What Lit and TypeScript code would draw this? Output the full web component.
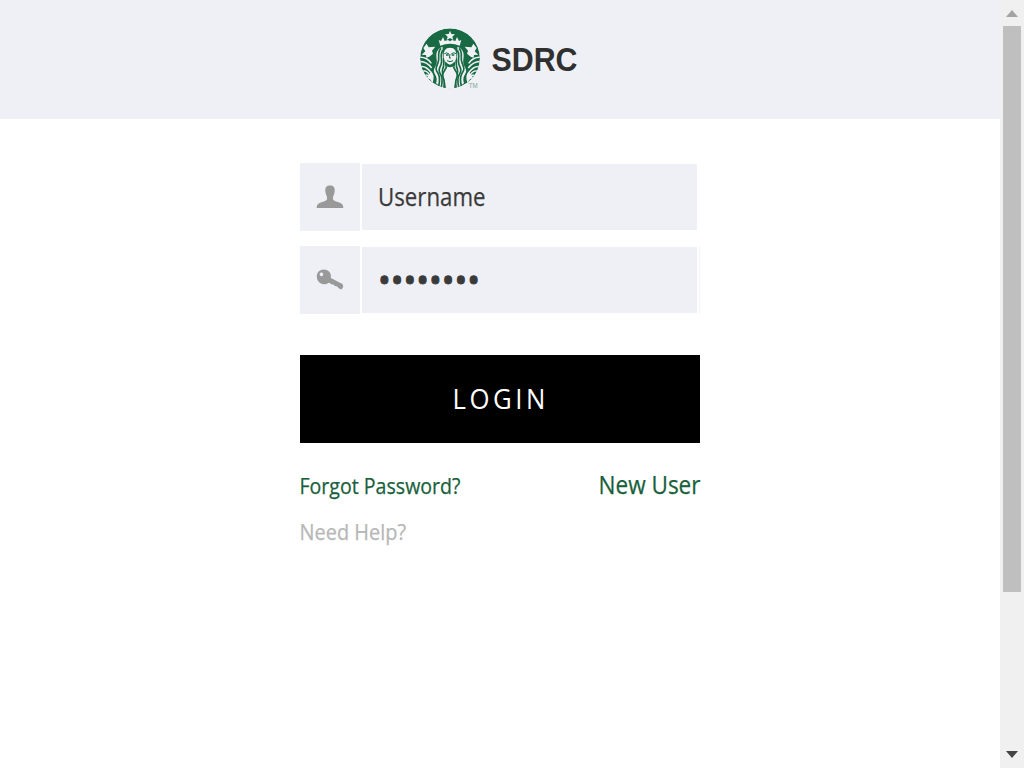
import { LitElement, html, css, svg } from "lit";
import { customElement } from "lit/decorators.js";

@customElement("brand-logo")
class BrandLogo extends LitElement {
  static styles = css`
    :host { display: block; width: 80px; height: 80px; }
    svg { display: block; width: 80px; height: 80px; }
    .tm { font: 400 19px "Liberation Sans", Arial, sans-serif; fill: #7fa594; }
  `;
  private half() {
    return svg`
      <path d="M40 84 L50 71 L56 82 L76 80 L66 92 L69 101 L58 110 L49 113 L48 105 L35 104 L46 94Z" fill="#f0f1f5"/>
      <g fill="none" stroke="#f0f1f5" stroke-width="4.5">
        <path d="M28 112 Q50 110 64 130"/>
        <path d="M26 125 Q48 122 65 144"/>
        <path d="M27 141 Q46 134 63 157"/>
        <path d="M34 156 Q47 146 60 166"/>
        <path d="M42 172 Q49 158 60 172"/>
      </g>
      <path d="M98 80 C77 89 78 103 80 118 C83 139 69 143 72 156 C75 167 84 170 78 190 L105 208 L113 155 C109 144 103 137 104 125 C97 108 97 94 98 80Z" fill="#f0f1f5"/>
      <path d="M62 153 Q76 164 68 188 L60 178 L47 174 Q59 168 62 153Z" fill="#f0f1f5"/>
      <g fill="none" stroke="#176a43" stroke-width="5">
        <path d="M93 85 C79 98 91 113 84 128 C78 143 75 148 84 160 Q92 173 86 199"/>
        <path d="M98 91 C88 106 99 119 93 134 C86 149 85 153 93 165 Q99 176 94 202"/>
        <path d="M102 111 C98 130 105 134 98 147 C94 158 101 164 103 173 Q105 184 101 205"/>
      </g>`;
  }
  render() {
    return html`<svg viewBox="0 0 240 240" aria-label="Siren logo">
      <defs><clipPath id="disc"><circle cx="120" cy="115" r="89.5"/></clipPath></defs>
      <g clip-path="url(#disc)">
        <circle cx="120" cy="115" r="90" fill="#176a43"/>
        <g>${this.half()}</g>
        <g transform="translate(240 0) scale(-1 1)">${this.half()}</g>
        <path d="M120 134 Q104 132 101 112 Q98 83 120 83 Q142 83 139 112 Q136 132 120 134Z" fill="#f0f1f5"/>
        <path d="M103 101 Q110 96 117 102 M124 101 Q132 96 138 101 M120 102 L118 114 L123 114 M111 122 Q120 128 129 122" fill="none" stroke="#176a43" stroke-width="3"/>
        <path d="M108 105h8M125 105h8" stroke="#176a43" stroke-width="4"/>
        <path d="M108 138 Q120 145 132 138 L136 151 Q147 165 138 181 L134 210 H106 L102 181 Q93 165 104 151Z" fill="#f0f1f5"/>
        <path d="M107 129 Q112 138 120 138 Q128 138 133 129 M110 139 Q107 146 103 153 Q94 163 102 180 L106 210 M130 139 Q133 146 137 153 Q146 163 138 180 L134 210" fill="none" stroke="#176a43" stroke-width="5"/>
        <path d="M120 32 L124 42 L135 43 L127 50 L130 60 L120 54 L110 60 L113 50 L105 43 L116 42Z" fill="#f0f1f5"/>
        <path d="M86 60 L93 63 L99 51 L104 63 L114 60 L120 64 L126 60 L136 63 L141 51 L147 63 L154 60 L149 77 Q120 66 91 77Z" fill="#f0f1f5"/>
      </g>
      <text class="tm" x="176" y="204" textLength="27" lengthAdjust="spacingAndGlyphs">TM</text>
    </svg>`;
  }
}

@customElement("app-root")
class AppRoot extends LitElement {
  static styles = css`
    :host { display: block; font-family: "Open Sans", "Noto Sans", sans-serif; }
    * { box-sizing: border-box; }
    .page { display: flex; width: 100%; height: 768px; background: #fff; overflow: hidden; }
    .main { width: 1000px; }
    .header { height: 119px; background: #eff0f5; display: flex; padding: 20px 0 0 410px; }
    svg { display: block; overflow: visible; }
    .name { font: 700 32.5px "Liberation Sans", Arial, sans-serif; fill: #303030; }
    .form { width: 400px; margin: 44px 0 0 300px; }
    .row { display: flex; align-items: center; height: 68px; margin-bottom: 15px; }
    .icon { width: 60px; height: 68px; background: #eff0f5; display: flex; align-items: center; justify-content: center; }
    .field { width: 335px; height: 66px; margin-left: 2px; background: #eff0f5; }
    .edge { width: 1px; height: 68px; margin-left: 2px; background: #f3f4f8; }
    .button { display: block; width: 400px; height: 88px; margin-top: 41px; padding: 0; border: 0; background: #000; font-family: inherit; }
    .links { display: flex; justify-content: space-between; margin-top: 26px; }
    .dark { fill: #3a3a3a; stroke: #3a3a3a; stroke-width: 0.25px; }
    .green { fill: #195f3b; stroke: #195f3b; stroke-width: 0.25px; }
    .grey { fill: #b7b7b7; stroke: #b7b7b7; stroke-width: 0.25px; }
    .white { fill: #fff; }
    .t26 { font-size: 26px; }
    .t22 { font-size: 22px; }
    .login { font-size: 28px; }
    .dots { font-size: 34px; stroke-width: 1px; }
    .scroll { width: 24px; height: 768px; background: #f0f0f0; display: flex; flex-direction: column; align-items: center; padding: 10px 0; }
    .thumb { width: 18px; height: 566px; background: #bfbfbf; margin-top: 9px; }
    .down { margin-top: auto; }
  `;
  render() {
    return html`<div class="page">
      <div class="main">
        <div class="header">
          <brand-logo></brand-logo>
          <svg width="90" height="80"><text class="name" x="1.5" y="51" textLength="86" lengthAdjust="spacingAndGlyphs">SDRC</text></svg>
        </div>
        <div class="form">
          <div class="row">
            <div class="icon"><svg width="28" height="24" viewBox="0 0 28 24"><path fill="#999" d="M14 0.5C10.5 0.5 9 2.5 9.3 6C9.5 9 10.5 10.5 11 12C11.4 14.5 10.8 15.3 8.5 16.2L4 17.8C1.5 18.8 .7 20.5 .7 23H27.3C27.3 20.5 26.5 18.8 24 17.8L19.5 16.2C17.2 15.3 16.6 14.5 17 12C17.5 10.5 18.5 9 18.7 6C19 2.5 17.5 .5 14 .5Z"/></svg></div>
            <div class="field"><svg width="335" height="66"><text class="dark t26" x="16" y="42" textLength="107.5" lengthAdjust="spacingAndGlyphs">Username</text></svg></div>
          </div>
          <div class="row">
            <div class="icon"><svg width="28" height="24" viewBox="0 0 28 24"><path fill="#999" fill-rule="evenodd" d="M8 1.5C3.5 1.5.8 4.5.8 8.5C.8 13 4 16 8 16.3C10 16.5 11.5 15.8 12.8 14.8L14.4 15.4L15.7 16.6L17.5 16.5L18.9 18L20.8 18.2L23 20.6L25.5 21.4L27.3 18.8L26.5 16L14.8 10.1C15.8 5.5 12.5 1.5 8 1.5ZM5.5 4.6A1.8 1.8 0 1 1 5.4 4.6Z"/></svg></div>
            <div class="field"><svg width="335" height="66"><text class="dark dots" x="16" y="45.5" textLength="102" lengthAdjust="spacingAndGlyphs">••••••••</text></svg></div>
            <div class="edge"></div>
          </div>
          <button class="button" aria-label="Login"><svg width="400" height="88"><text class="white login" transform="translate(152.5 54) scale(.92 1)" x="0" y="0" textLength="101" lengthAdjust="spacing">LOGIN</text></svg></button>
          <div class="links">
            <svg width="162" height="46"><text class="green t22" x="-0.5" y="25" textLength="161" lengthAdjust="spacingAndGlyphs">Forgot Password?</text></svg>
            <svg width="102" height="46"><text class="green t26" x="0.5" y="25" textLength="102" lengthAdjust="spacingAndGlyphs">New User</text></svg>
          </div>
          <svg width="110" height="30"><text class="grey t22" x="-0.5" y="25" textLength="106.5" lengthAdjust="spacingAndGlyphs">Need Help?</text></svg>
        </div>
      </div>
      <div class="scroll">
        <svg width="12" height="7"><path d="M0 7L6 0L12 7Z" fill="#a3a3a3"/></svg>
        <div class="thumb"></div>
        <svg class="down" width="12" height="7"><path d="M0 0H12L6 7Z" fill="#444"/></svg>
      </div>
    </div>`;
  }
}
